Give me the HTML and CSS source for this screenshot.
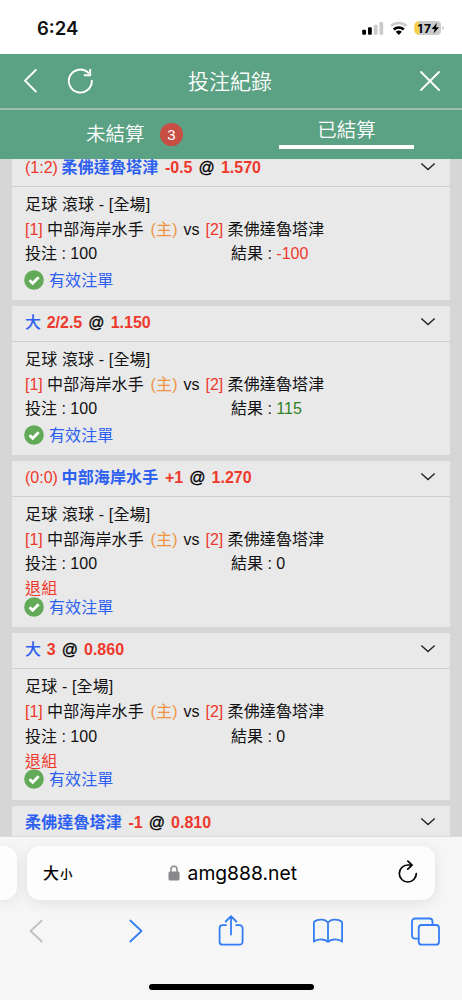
FILE: index.html
```html
<!DOCTYPE html>
<html lang="zh-Hant">
<head>
<meta charset="utf-8">
<meta name="viewport" content="width=device-width">
<title>投注紀錄</title>
<link rel="stylesheet" href="styles.css">
</head>
<body>
<div class="phone">
  <div class="status">
    <span class="time">6:24</span>
    <svg class="status-icons" width="84" height="18" viewBox="0 0 84 18">
      <rect x="0.2" y="9.8" width="3.8" height="5" rx="1" fill="#000"/>
      <rect x="6" y="7.3" width="3.8" height="7.5" rx="1" fill="#000"/>
      <rect x="11.8" y="4.8" width="3.8" height="10" rx="1" fill="#cbcbcb"/>
      <rect x="17.4" y="2" width="3.8" height="12.8" rx="1" fill="#cbcbcb"/>
      <g fill="none">
        <path d="M29 6.1a11.4 11.4 0 0 1 15.6 0" stroke="#cbcbcb" stroke-width="2.7"/>
        <path d="M31.8 9.5a7.4 7.4 0 0 1 10 0" stroke="#000" stroke-width="2.6"/>
      </g>
      <path d="M33.7 11.8a4.6 4.6 0 0 1 6.2 0L36.800 14.900z" fill="#000"/>
      <path d="M56.500 1H75a4 4 0 0 1 4 4v6a4 4 0 0 1-4 4H56.500z" fill="#cbcbcb"/>
      <path d="M57 1a5 5 0 0 0-4.800 5v4a5 5 0 0 0 4.800 5z" fill="#f8cf48"/>
      <path d="M80.200 6q1.800.4 1.800 2t-1.800 2z" fill="#cbcbcb"/>
      <text class="battery" x="55.600" y="12.500" textLength="13.500">17</text>
      <path d="M75 2.800L69.600 8.900h3l-1 4.600 5.400-6.200h-3.100z" fill="#000"/>
    </svg>
  </div>

  <header class="topbar">
    <svg class="nav-left" width="78" height="28" viewBox="0 0 78 28" fill="none" stroke="#fff" stroke-width="1.900" stroke-linecap="round" stroke-linejoin="round">
      <path d="M15.800 3L5 13.700l10.800 10.800"/>
      <path d="M71.800 13.700a11.500 11.500 0 1 1-3.500-7.900M70.200 2.600v5.600h-5.600"/>
    </svg>
    <h1>投注紀錄</h1>
    <svg class="close" width="22" height="22" viewBox="0 0 22 22" stroke="#fff" stroke-width="1.900" stroke-linecap="round"><path d="M2 2l18 18M20 2L2 20"/></svg>
  </header>

  <nav class="tabs">
    <div class="tab"><span class="tab-label">未結算</span><span class="count">3</span></div>
    <div class="tab active"><span class="active-label">已結算</span></div>
  </nav>

  <main class="list">
    <article class="card">
      <div class="card-head"><span class="score">(1:2)</span><b class="pick">柔佛達魯塔津</b><b class="red">-0.5</b><span class="at">@</span><b class="red">1.570</b><svg class="chev" width="16" height="10" viewBox="0 0 16 10"><path d="M1.300 1.500L8 7.500l6.700-6"/></svg></div>
      <div class="card-body">
        <p>足球 滾球 - [全場]</p>
        <p class="match"><i>[1]</i><span class="home">中部海岸水手</span><em>(主)</em><span class="vs">vs</span><i>[2]</i><span>柔佛達魯塔津</span></p>
        <p class="result"><span>投注 : 100</span><span>結果 : <i>-100</i></span></p>
        <div class="valid"><svg width="20" height="20" viewBox="0 0 20 20"><circle cx="10" cy="10" r="9.800"/><path d="M5.500 10.200l3.200 3.100 6-6.100"/></svg><span>有效注單</span></div>
      </div>
    </article>

    <article class="card">
      <div class="card-head"><b class="pick single">大</b><b class="red">2/2.5</b><span class="at">@</span><b class="red">1.150</b><svg class="chev" width="16" height="10" viewBox="0 0 16 10"><path d="M1.300 1.500L8 7.500l6.700-6"/></svg></div>
      <div class="card-body">
        <p>足球 滾球 - [全場]</p>
        <p class="match"><i>[1]</i><span class="home">中部海岸水手</span><em>(主)</em><span class="vs">vs</span><i>[2]</i><span>柔佛達魯塔津</span></p>
        <p class="result"><span>投注 : 100</span><span>結果 : <span class="win">115</span></span></p>
        <div class="valid"><svg width="20" height="20" viewBox="0 0 20 20"><circle cx="10" cy="10" r="9.800"/><path d="M5.500 10.200l3.200 3.100 6-6.100"/></svg><span>有效注單</span></div>
      </div>
    </article>

    <article class="card void">
      <div class="card-head"><span class="score">(0:0)</span><b class="pick">中部海岸水手</b><b class="red">+1</b><span class="at">@</span><b class="red">1.270</b><svg class="chev" width="16" height="10" viewBox="0 0 16 10"><path d="M1.300 1.500L8 7.500l6.700-6"/></svg></div>
      <div class="card-body">
        <p>足球 滾球 - [全場]</p>
        <p class="match"><i>[1]</i><span class="home">中部海岸水手</span><em>(主)</em><span class="vs">vs</span><i>[2]</i><span>柔佛達魯塔津</span></p>
        <p class="result"><span>投注 : 100</span><span>結果 : 0</span></p>
        <p class="refund">退組</p>
        <div class="valid"><svg width="20" height="20" viewBox="0 0 20 20"><circle cx="10" cy="10" r="9.800"/><path d="M5.500 10.200l3.200 3.100 6-6.100"/></svg><span>有效注單</span></div>
      </div>
    </article>

    <article class="card void">
      <div class="card-head"><b class="pick single">大</b><b class="red">3</b><span class="at">@</span><b class="red">0.860</b><svg class="chev" width="16" height="10" viewBox="0 0 16 10"><path d="M1.300 1.500L8 7.500l6.700-6"/></svg></div>
      <div class="card-body">
        <p>足球 - [全場]</p>
        <p class="match"><i>[1]</i><span class="home">中部海岸水手</span><em>(主)</em><span class="vs">vs</span><i>[2]</i><span>柔佛達魯塔津</span></p>
        <p class="result"><span>投注 : 100</span><span>結果 : 0</span></p>
        <p class="refund">退組</p>
        <div class="valid"><svg width="20" height="20" viewBox="0 0 20 20"><circle cx="10" cy="10" r="9.800"/><path d="M5.500 10.200l3.200 3.100 6-6.100"/></svg><span>有效注單</span></div>
      </div>
    </article>

    <article class="card">
      <div class="card-head"><b class="pick">柔佛達魯塔津</b><b class="red">-1</b><span class="at">@</span><b class="red">0.810</b><svg class="chev" width="16" height="10" viewBox="0 0 16 10"><path d="M1.300 1.500L8 7.500l6.700-6"/></svg></div>
    </article>
  </main>

  <footer class="browser">
    <div class="address-row">
      <div class="prev-tab"></div>
      <div class="address">
        <span class="size">大<small>小</small></span>
        <span class="url"><svg width="12" height="16" viewBox="0 0 12 16"><rect x="0.500" y="6.600" width="11" height="9" rx="1.500" fill="#88888d"/><path d="M3 7V4.300a3 3 0 0 1 6 0V7" fill="none" stroke="#88888d" stroke-width="1.500"/></svg>amg888.net</span>
        <svg class="reload" width="20" height="24" viewBox="0 0 20 24" fill="none" stroke="#000" stroke-width="1.700" stroke-linecap="round" stroke-linejoin="round"><path d="M18.300 13.500a8.500 8.500 0 1 1-8.500-8.500h4M9.900 1.200l4.200 3.900L9.800 9.200"/></svg>
      </div>
    </div>
    <div class="tools">
      <svg width="14" height="24" viewBox="0 0 14 24" stroke="#bfbfbf"><path d="M12.800 1.500L1.500 12l11.300 10.500"/></svg>
      <svg width="14" height="24" viewBox="0 0 14 24"><path d="M1.300 1.500L12.500 12 1.300 22.500"/></svg>
      <svg class="share" width="26" height="32" viewBox="0 0 26 32"><path d="M8 11.200H4.600a3 3 0 0 0-3 3v13.500a3 3 0 0 0 3 3h17a3 3 0 0 0 3-3V14.200a3 3 0 0 0-3-3h-3.400M13 20.500V2.500M7.700 7.500L13 2.200l5.300 5.300"/></svg>
      <svg width="30" height="26" viewBox="0 0 30 26"><path d="M15 4.800C12.500.7 4.800.7 1.500 3.500c-.5.500-.6.800-.6 1.400v18.700c3-3.100 10.800-3.100 14.100.4 3.300-3.500 11.100-3.500 14.100-.4V4.900c0-.6-.1-.9-.6-1.400C25.200.7 17.500.7 15 4.800zv19"/></svg>
      <svg width="29" height="29" viewBox="0 0 29 29"><rect x="7.700" y="8" width="20.300" height="19.700" rx="3"/><path d="M7.700 21.700H4a3 3 0 0 1-3-3V4.500a3 3 0 0 1 3-3h14.500a3 3 0 0 1 3 3V8"/></svg>
    </div>
    <div class="home-bar"></div>
  </footer>
</div>
</body>
</html>
```

FILE: styles.css
```css
* { box-sizing: border-box; }
body { margin: 0; background: #fff; }
p, h1 { margin: 0; }
i, em { font-style: normal; }
svg { flex: none; }

.phone {
  display: flex;
  flex-direction: column;
  width: 462px;
  height: 1000px;
  overflow: hidden;
  font-family: "Liberation Sans", "Noto Sans CJK TC", sans-serif;
  font-size: 16px;
  color: #111;
}

.status {
  display: flex;
  flex: none;
  justify-content: space-between;
  height: 54px;
  padding: 19px 16px 0 37px;
}
.time { font: 600 18.500px/19px Inter, sans-serif; }
.status-icons { margin-top: 1px; }
.battery { font: 700 12px Inter, sans-serif; }

.topbar {
  display: flex;
  flex: none;
  align-items: center;
  justify-content: space-between;
  height: 56px;
  padding: 0 21px 2px 20px;
  background: #5ba183;
  border-bottom: 2px solid #a0bdae;
  color: #fff;
}
.nav-left { margin-right: 77px; }
.nav-left, .close { margin-top: 1px; }
.topbar h1 {
  flex: 1;
  padding: 3px 0 0 13px;
  font-size: 21px;
  font-weight: 350;
  line-height: 30px;
}

.tabs {
  display: grid;
  flex: none;
  grid-template-columns: 1fr 1fr;
  height: 49px;
  background: #5ba183;
  color: #fff;
  font-size: 19.500px;
  font-weight: 350;
}
.tab {
  display: flex;
  align-items: center;
  padding: 0 0 1px 86px;
}
.tab-label { margin-top: -3px; }
.count {
  width: 23px;
  height: 23px;
  margin: 1px 0 0 15.500px;
  border-radius: 50%;
  background: #c84d43;
  font: 15px/23px "Liberation Sans", sans-serif;
  text-align: center;
}
.tab.active { padding: 0 0 0 48px; align-items: flex-start; }
.active-label {
  width: 135px;
  height: 39px;
  border-bottom: 4px solid #fff;
  line-height: 40px;
  text-align: center;
}

.list {
  display: flex;
  flex: none;
  flex-direction: column;
  gap: 6px;
  height: 677px;
  overflow: hidden;
  padding: 0 12px;
  background: #d6d6d6;
}
.card { flex: none; height: 149px; background: #e9e9e9; }
.card:first-child { margin-top: -8px; }
.card.void { height: 166.400px; }
.card-head {
  display: flex;
  align-items: baseline;
  height: 35.500px;
  padding: 0 14px 0 13px;
  border-bottom: 1.500px solid #cecece;
  line-height: 33px;
}
.score { width: 36.500px; color: #ee392c; }
.pick { margin-right: 6.500px; color: #2d5ff0; letter-spacing: .15px; line-height: 30px; }
.pick.single { margin-right: 5.500px; font-weight: 500; }
.red { color: #ee392c; }
.at { margin: 0 6.100px; color: #000; -webkit-text-stroke: .3px #000; }
.chev { align-self: flex-start; margin: 11px 0 0 auto; fill: none; stroke: #222; stroke-width: 1.400; }

.card-body { padding: 5.600px 13px 0; }
.card-body p { height: 24.700px; line-height: 25px; white-space: pre; letter-spacing: .15px; }
.card-body i { color: #ee392c; }
.card-body .match { display: flex; }
.match i { width: 22px; letter-spacing: 0; }
.home { width: 103.500px; }
.match em { width: 33px; color: #ef9342; }
.vs { width: 22px; letter-spacing: 0; }
.card-body .result { display: grid; grid-template-columns: 206px 1fr; letter-spacing: 0; }
.win { color: #2f8223; }
.card-body .refund { height: 18.500px; color: #ee392c; }
.valid {
  display: flex;
  align-items: center;
  gap: 5px;
  height: 27px;
  color: #2d5ff0;
  letter-spacing: .1px;
}
.valid span { margin-top: -2px; }
.void .valid { height: 24px; }
.valid svg { margin-left: -1px; fill: #63aa58; }
.valid path { fill: none; stroke: #fff; stroke-width: 2.800; }

.browser {
  display: flex;
  flex: 1;
  flex-direction: column;
  border-top: 1px solid #dadada;
  background: #f6f6f6;
}
.address-row { display: flex; gap: 10px; padding-top: 9px; }
.prev-tab, .address { height: 54px; background: #fdfdfd; box-shadow: 0 3px 14px rgba(0, 0, 0, .09); }
.prev-tab { width: 17px; border-radius: 0 13px 13px 0; }
.address {
  display: flex;
  align-items: center;
  justify-content: space-between;
  width: 408px;
  padding: 0 17px 0 16px;
  border-radius: 13px;
  color: #000;
}
.size { margin-top: -2px; font-weight: 500; }
.size small { margin-left: 1px; font-size: 12.500px; }
.url {
  display: flex;
  align-items: center;
  gap: 8px;
  margin-left: 34px;
  margin-right: 40px;
  font: 19.300px/24px Inter, sans-serif;
}
.reload { margin-top: -2px; }
.tools {
  display: flex;
  align-items: center;
  height: 34px;
  margin-top: 14px;
  padding-left: 29px;
}
.tools svg { fill: none; stroke-width: 1.800; stroke-linecap: round; stroke-linejoin: round; }
.tools svg:not([stroke]) { stroke: #347df6; }
.tools svg:nth-child(2) { margin-left: 86px; }
.tools .share { margin: -3px 0 0 75px; }
.tools svg:nth-child(4) { margin-left: 69px; }
.tools svg:nth-child(5) { margin-left: 68px; }
.home-bar {
  width: 165px;
  height: 6px;
  margin: 36px 0 0 149px;
  border-radius: 3px;
  background: #000;
}
```
